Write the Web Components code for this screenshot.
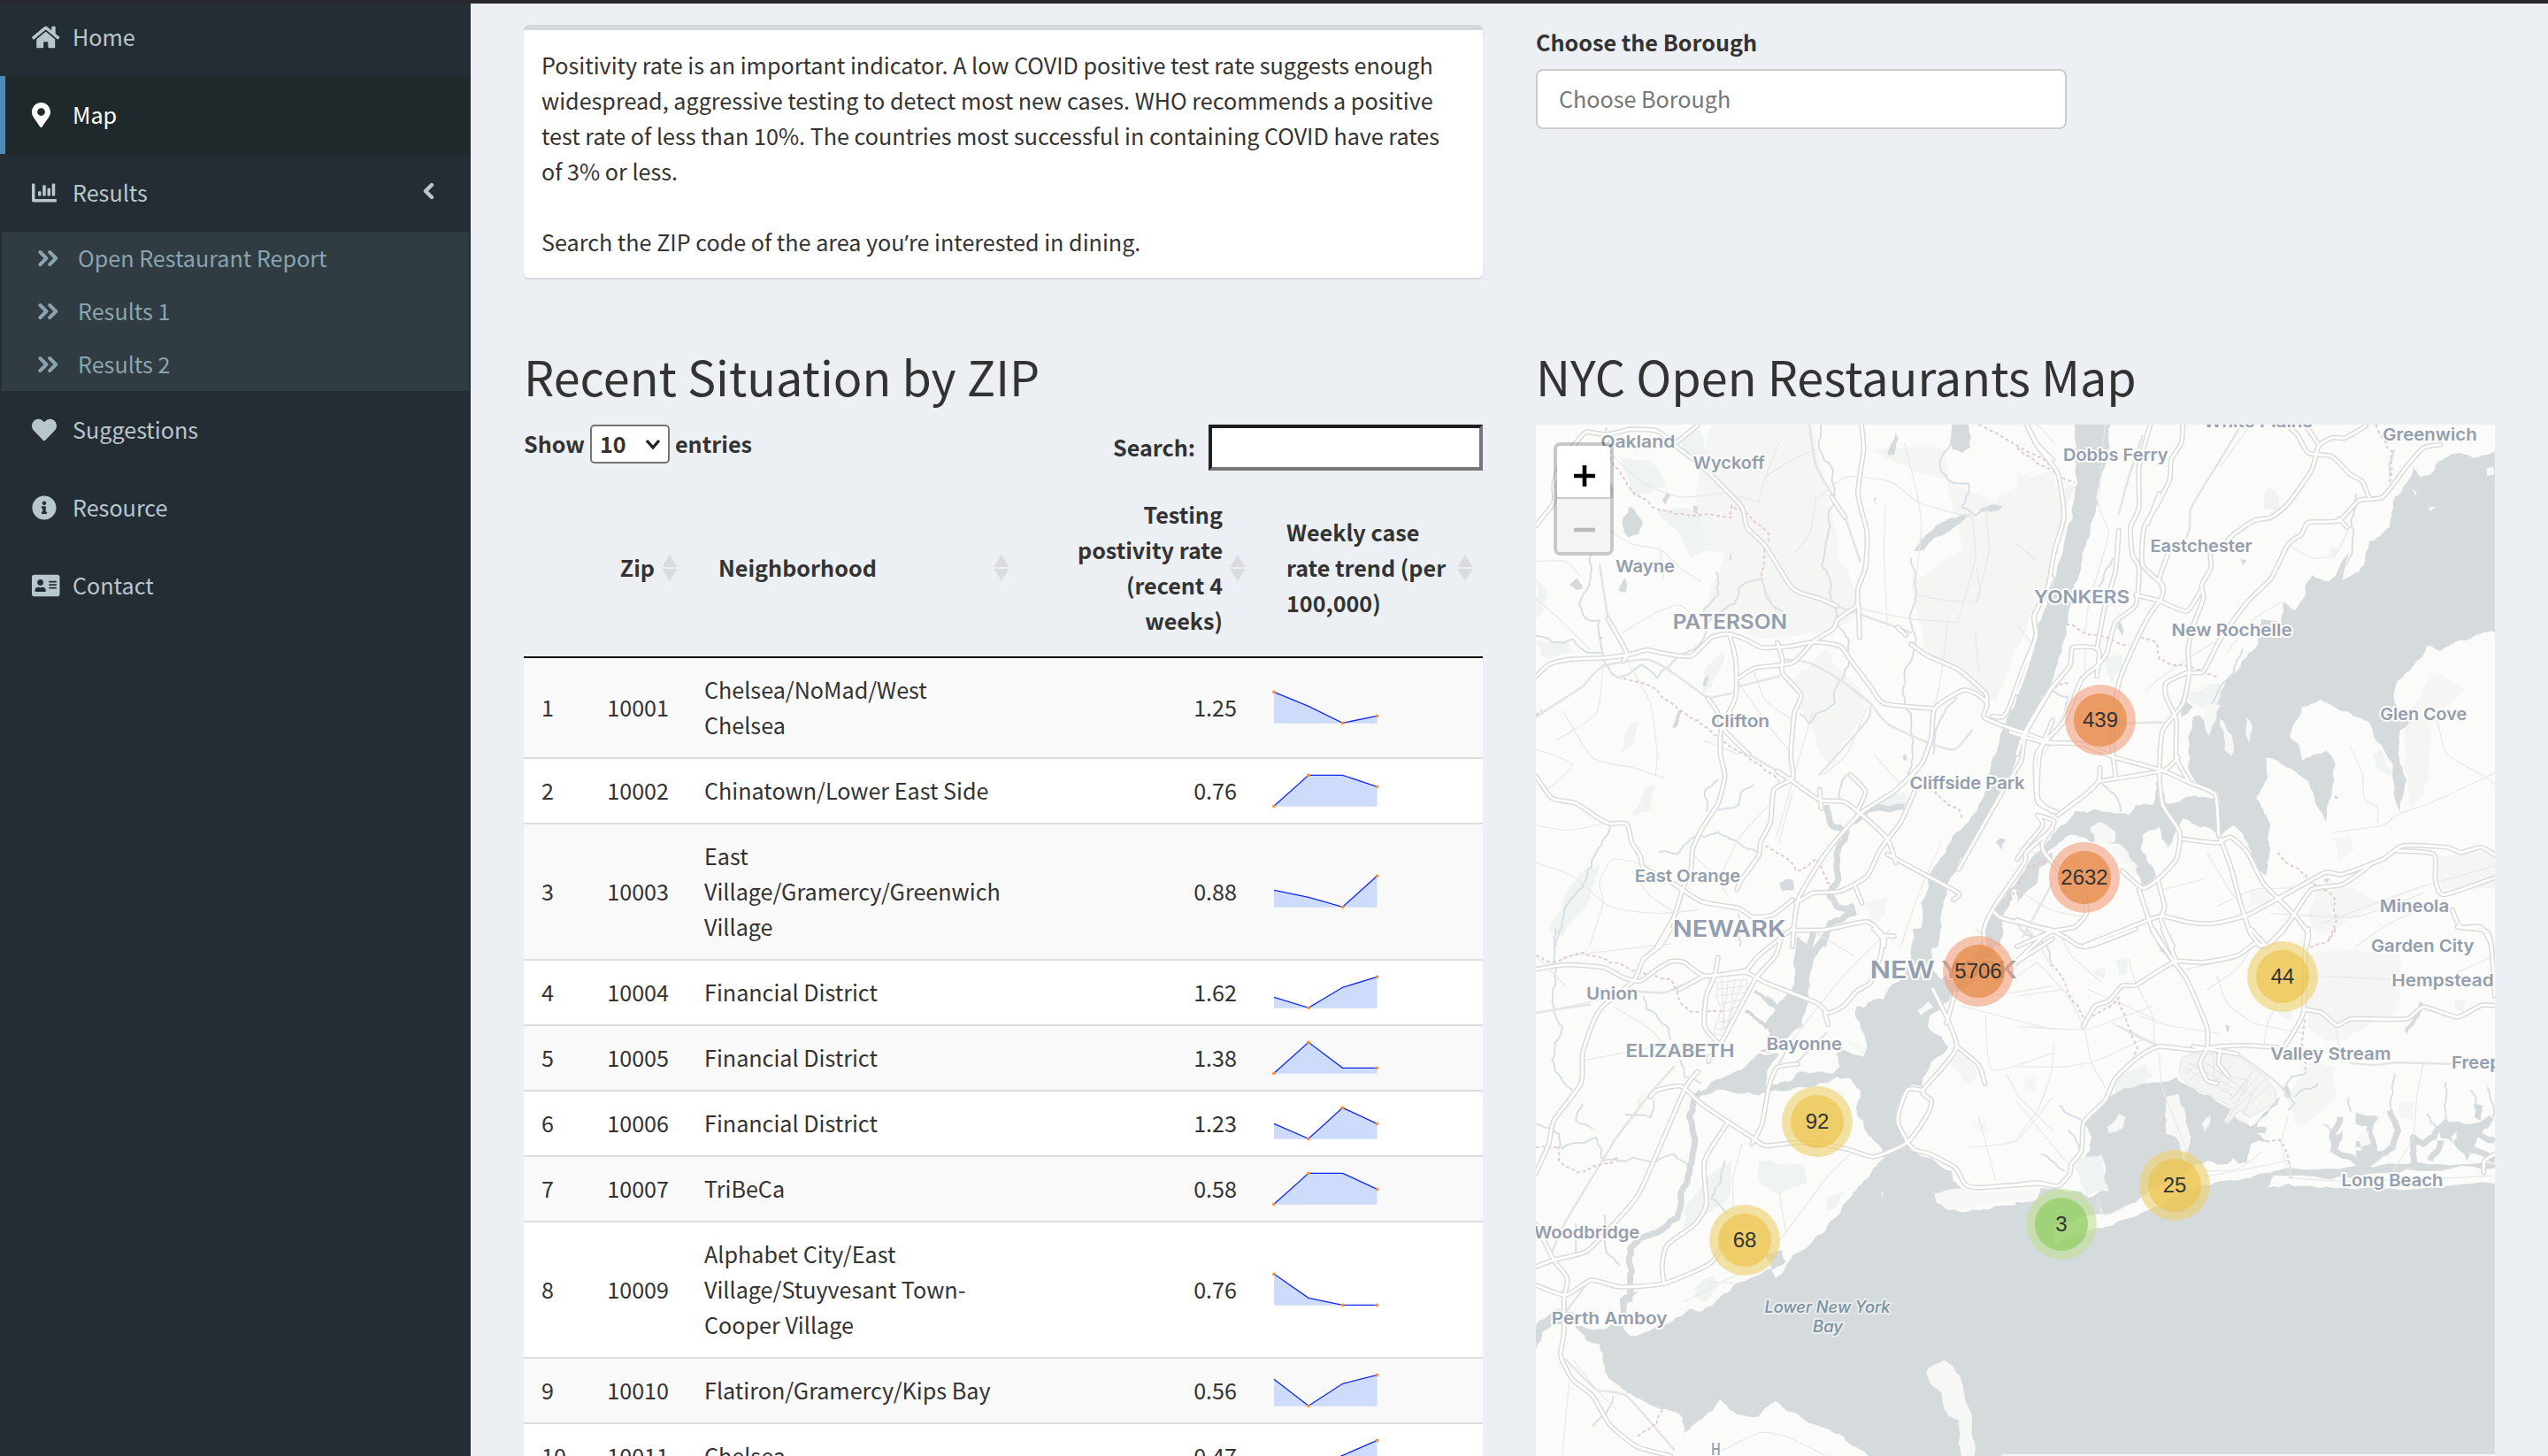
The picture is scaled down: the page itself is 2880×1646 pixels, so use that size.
<!DOCTYPE html>
<html lang="en">
<head>
<meta charset="utf-8">
<title>NYC Open Restaurants</title>
<style>
html,body{margin:0;height:100%;overflow:hidden;background:#ecf0f5}
body{font-family:"Noto Sans CJK SC","Noto Sans CJK JP","Open Sans",sans-serif;font-size:25.15px;line-height:40px;color:#333}
</style>
</head>
<body>
<dash-app></dash-app>
<script>
function define(name, css, html) {
  customElements.define(name, class extends HTMLElement {
    connectedCallback() {
      if (this.shadowRoot) return;
      this.attachShadow({mode: 'open'}).innerHTML = '<style>*{box-sizing:border-box}' + css + '</style>' + (typeof html === 'function' ? html(this) : html);
    }
  });
}

var ICONS = {
  home: [576, 'M280.37 148.26L96 300.11V464a16 16 0 0 0 16 16l112.06-.29a16 16 0 0 0 15.92-16V368a16 16 0 0 1 16-16h64a16 16 0 0 1 16 16v95.64a16 16 0 0 0 16 16.05L464 480a16 16 0 0 0 16-16V300L295.67 148.26a12.19 12.19 0 0 0-15.3 0zM571.6 251.47L488 182.56V44.05a12 12 0 0 0-12-12h-56a12 12 0 0 0-12 12v72.61L318.47 43a48 48 0 0 0-61 0L4.34 251.47a12 12 0 0 0-1.6 16.9l25.5 31A12 12 0 0 0 45.15 301l235.22-193.74a12.19 12.19 0 0 1 15.3 0L530.9 301a12 12 0 0 0 16.9-1.6l25.5-31a12 12 0 0 0-1.7-16.93z'],
  marker: [384, 'M172.268 501.67C26.97 291.031 0 269.413 0 192 0 85.961 85.961 0 192 0s192 85.961 192 192c0 77.413-26.97 99.031-172.268 309.67-9.535 13.774-29.93 13.773-39.464 0zM192 272c44.183 0 80-35.817 80-80s-35.817-80-80-80-80 35.817-80 80 35.817 80 80 80z'],
  chart: [512, 'M332.8 320h38.4c6.4 0 12.8-6.4 12.8-12.8V172.8c0-6.4-6.4-12.8-12.8-12.8h-38.4c-6.4 0-12.8 6.4-12.8 12.8v134.4c0 6.4 6.4 12.8 12.8 12.8zm96 0h38.4c6.4 0 12.8-6.4 12.8-12.8V76.8c0-6.4-6.4-12.8-12.8-12.8h-38.4c-6.4 0-12.8 6.4-12.8 12.8v230.4c0 6.4 6.4 12.8 12.8 12.8zm-288 0h38.4c6.4 0 12.8-6.4 12.8-12.8v-70.4c0-6.4-6.4-12.8-12.8-12.8h-38.4c-6.4 0-12.8 6.4-12.8 12.8v70.4c0 6.4 6.4 12.8 12.8 12.8zm96 0h38.4c6.4 0 12.8-6.4 12.8-12.8V108.8c0-6.4-6.4-12.8-12.8-12.8h-38.4c-6.4 0-12.8 6.4-12.8 12.8v198.4c0 6.4 6.4 12.8 12.8 12.8zM496 384H64V80c0-8.84-7.16-16-16-16H16C7.16 64 0 71.16 0 80v336c0 17.67 14.33 32 32 32h464c8.84 0 16-7.16 16-16v-32c0-8.84-7.16-16-16-16z'],
  heart: [512, 'M462.3 62.6C407.5 15.9 326 24.3 275.7 76.2L256 96.5l-19.7-20.3C186.1 24.3 104.5 15.9 49.7 62.6c-62.8 53.6-66.1 149.8-9.9 207.9l193.5 199.8c12.5 12.9 32.8 12.9 45.3 0l193.5-199.8c56.3-58.1 53-154.3-9.8-207.9z'],
  info: [512, 'M256 8C119.043 8 8 119.083 8 256c0 136.997 111.043 248 248 248s248-111.003 248-248C504 119.083 392.957 8 256 8zm0 110c23.196 0 42 18.804 42 42s-18.804 42-42 42-42-18.804-42-42 18.804-42 42-42zm56 254c0 6.627-5.373 12-12 12h-88c-6.627 0-12-5.373-12-12v-24c0-6.627 5.373-12 12-12h12v-64h-12c-6.627 0-12-5.373-12-12v-24c0-6.627 5.373-12 12-12h64c6.627 0 12 5.373 12 12v100h12c6.627 0 12 5.373 12 12v24z'],
  card: [576, 'M528 32H48C21.5 32 0 53.5 0 80v352c0 26.5 21.5 48 48 48h480c26.5 0 48-21.5 48-48V80c0-26.5-21.5-48-48-48zm-352 96c35.3 0 64 28.7 64 64s-28.7 64-64 64-64-28.7-64-64 28.7-64 64-64zm112 236.8c0 10.6-10 19.2-22.4 19.2H86.4C74 384 64 375.4 64 364.8v-19.2c0-31.8 30.1-57.6 67.2-57.6h5c12.3 5.1 25.7 8 39.8 8s27.6-2.9 39.8-8h5c37.1 0 67.2 25.8 67.2 57.6v19.2zM512 312c0 4.4-3.6 8-8 8H360c-4.4 0-8-3.6-8-8v-16c0-4.4 3.6-8 8-8h144c4.4 0 8 3.6 8 8v16zm0-64c0 4.4-3.6 8-8 8H360c-4.4 0-8-3.6-8-8v-16c0-4.4 3.6-8 8-8h144c4.4 0 8 3.6 8 8v16zm0-64c0 4.4-3.6 8-8 8H360c-4.4 0-8-3.6-8-8v-16c0-4.4 3.6-8 8-8h144c4.4 0 8 3.6 8 8v16z']
};

define('side-item', `
:host{display:flex;align-items:center;height:88px;padding:0 41px 0 36px;color:#b8c7ce;box-sizing:border-box}
:host([active]){color:#fff;background:#1f282b;border-left:6px solid #4f8cba;padding-left:30px}
.i{width:46px;display:flex}.t{flex:1;padding-bottom:3px}svg{display:block}`,
function (el) {
  var icon = ICONS[el.getAttribute('icon')];
  return `<span class="i"><svg width="${icon[0] * 28 / 512}" height="28" viewBox="0 0 ${icon[0]} 512"><path fill="currentColor" d="${icon[1]}"/></svg></span><span class="t"><slot></slot></span>` +
    (el.hasAttribute('tree') ? '<svg width="14" height="22" viewBox="0 0 14 22" style="margin-bottom:4px"><path d="M11 4L4 11l7 7" fill="none" stroke="currentColor" stroke-width="4.4" stroke-linecap="round" stroke-linejoin="round"/></svg>' : '');
});

define('side-subitem', `
:host{display:flex;align-items:center;height:60px;padding-left:41px;color:#8aa4af;box-sizing:border-box}
svg{display:block;margin-right:22px}.t{padding-bottom:2px}`,
`<svg width="23" height="20" viewBox="0 0 23 20"><path d="M2.4 3l7 7-7 7M13.2 3l7 7-7 7" fill="none" stroke="currentColor" stroke-width="4" stroke-linecap="round" stroke-linejoin="round"/></svg><span class="t"><slot></slot></span>`);

define('dash-sidebar', `
:host{display:block;width:532px;flex:none;background:#242d34;overflow:hidden}
nav{margin-top:-6px}.sub{background:#303b42;margin:0 2px}`,
`<nav><side-item icon="home">Home</side-item><side-item icon="marker" active>Map</side-item><side-item icon="chart" tree>Results</side-item>
<div class="sub"><side-subitem>Open Restaurant Report</side-subitem><side-subitem>Results 1</side-subitem><side-subitem>Results 2</side-subitem></div>
<side-item icon="heart">Suggestions</side-item><side-item icon="info">Resource</side-item><side-item icon="card">Contact</side-item></nav>`);

define('info-box', `
:host{display:block;box-sizing:border-box;height:286px;background:#fff;border-top:6px solid #d2d6de;border-radius:6px;padding:19px 18px 21px 20px;box-shadow:0 2px 2px rgba(0,0,0,.1);white-space:nowrap}`,
`<slot></slot>`);

define('spark-line', `:host{display:block;height:36px}svg{display:block;overflow:visible}`, function (el) {
  var xs = [0, 39, 77.5, 116.5];
  var p = el.getAttribute('v').split(',').map(function (y, i) { return [xs[i], 35.3 - y]; });
  var dots = el.getAttribute('dots').split(',').map(function (i) { return `<circle cx="${p[i][0]}" cy="${p[i][1]}" r="1.9" fill="#f5923b"/>`; }).join('');
  return `<svg width="117" height="36"><path fill="#cedcfb" d="M0 35.8L${p.join('L')}V35.8z"/><polyline fill="none" stroke="#1226f0" stroke-width="1.3" points="${p.join(' ')}"/>${dots}</svg>`;
});

var ROWS = [
  ['10001', 'Chelsea/NoMad/West<br>Chelsea', '1.25', '35,19,0,8', '0,2,3'],
  ['10002', 'Chinatown/Lower East Side', '0.76', '0,35,35,22', '0,1,3'],
  ['10003', 'East<br>Village/Gramercy/Greenwich<br>Village', '0.88', '19,11,0,35', '2,3'],
  ['10004', 'Financial District', '1.62', '12,0,23,35', '1,3'],
  ['10005', 'Financial District', '1.38', '0,35,6,6', '0,1,3'],
  ['10006', 'Financial District', '1.23', '17,0,35,17', '1,2,3'],
  ['10007', 'TriBeCa', '0.58', '0,35,35,17', '0,1,3'],
  ['10009', 'Alphabet City/East<br>Village/Stuyvesant Town-<br>Cooper Village', '0.76', '35,8,0,0', '0,2,3'],
  ['10010', 'Flatiron/Gramercy/Kips Bay', '0.56', '30,0,25,35', '1,3'],
  ['10011', 'Chelsea', '0.47', '5,0,18,35', '1,3']
];
var SORT = '<svg class="s" width="18" height="30" viewBox="0 0 18 30"><path fill="#d9dbde" d="M9 0l8.5 14H.5zM9 30L.5 16h17z"/></svg>';
define('zip-table', `
:host{display:block}
.bar{display:flex;justify-content:space-between;align-items:flex-start;height:62px;font-weight:700}
.len{display:flex;align-items:center;height:44px;gap:6px}
.sel{display:flex;align-items:center;justify-content:space-between;width:90px;height:44px;border:2px solid #757575;border-radius:5px;background:#fff;padding:0 8px 0 9px}
.find{display:flex;align-items:center;gap:15px}
.find input{display:block;width:310px;height:52px;margin:0;padding:0;border:4px solid;border-color:#1f1e22 #767676 #767676 #1f1e22;background:#fff;outline:0}
.r{display:grid;grid-template-columns:82px 102px 376px 266px 258px;align-items:center}
.r>*{padding:0 20px}.r>.n{text-align:right;padding-left:0}
.h{height:202px;border-bottom:2px solid #111;font-weight:700}
.h>*{padding:0 11px 0 36px;display:flex;align-items:center;align-self:stretch;justify-content:space-between}
.h>*>span{margin-top:-2px}
.h>.n{padding:0 10px;justify-content:flex-end;gap:8px}
.s{flex:none;display:block}
.b{padding:15px 0 17px;background:#fff;border-top:2px solid #ddd}
.b:nth-child(odd){background:#f9f9f9}
.b:first-child{border-top:0}
.b>:last-child{padding:2px 0 0 22px}
.c{margin-top:-2px}`,
function () {
  return `<div class="bar"><div class="len"><span class="c">Show</span><span class="sel"><span class="c">10</span><svg width="18" height="14" viewBox="0 0 18 14"><path d="M2 3l7 8 7-8" fill="none" stroke="#222" stroke-width="3.4"/></svg></span><span class="c">entries</span></div>
  <label class="find"><span class="c">Search:</span><input type="text"></label></div>
  <div class="r h"><span></span><span class="n"><span>Zip</span>${SORT}</span><span><span>Neighborhood</span>${SORT}</span><span class="n"><span>Testing<br>postivity rate<br>(recent 4<br>weeks)</span>${SORT}</span><span><span>Weekly case<br>rate trend (per<br>100,000)</span>${SORT}</span></div>
  <div>` + ROWS.map(function (r, i) {
    return `<div class="r b"><span>${i + 1}</span><span class="n">${r[0]}</span><span>${r[1]}</span><span class="n">${r[2]}</span><span><spark-line v="${r[3]}" dots="${r[4]}"></spark-line></span></div>`;
  }).join('') + '</div>';
});

define('borough-field', `
:host{display:block;height:366px;box-sizing:border-box}
b{display:block;height:40px;line-height:38px}
.f{display:flex;align-items:center;width:600px;height:68px;margin-top:10px;border:2px solid #ccc;border-radius:8px;background:#fff;padding:0 24px 2px;color:#777}`,
`<b><slot name="label"></slot></b><div class="f"><slot></slot></div>`);

define('map-cluster', `
:host{position:absolute;box-sizing:border-box;width:80px;height:80px;margin:-40px 0 0 -40px;border-radius:50%;padding:10px;background:rgba(238,209,107,.6);--core:rgba(236,193,67,.6)}
:host([size=large]){background:rgba(241,159,124,.6);--core:rgba(227,129,50,.6)}
:host([size=small]){background:rgba(191,225,149,.6);--core:rgba(133,202,85,.6)}
div{height:60px;border-radius:50%;background:var(--core);text-align:center;font:24px/60px "Liberation Sans",Arial,sans-serif;color:#333}`,
`<div><slot></slot></div>`);

/* Four map tiles; each keeps its own local units, placed by TILES: x, y, x scale, y scale. */
var K = 0.38265, KY = 0.3801;
var TILES = { A: [-16, -10, K, K], B: [544, -10, K, K], C: [-16, 570, K, KY], D: [544, 570, K, KY] };
var MAP = {
urban: {
 A: ['560,26 860,26 900,200 930,400 1000,560 980,600 900,640 700,660 530,570 600,400 500,400 520,200','800,780 900,690 1010,830 1000,900 920,1030 880,1000','1030,100 1250,100 1300,400 1150,500 1200,700 1350,820 1400,850 1500,600 1568,400 1568,160 1400,250','1020,1440 1080,1420 1060,1490 1030,1530'],
 B: ['0,170 110,200 140,300 100,480 50,580 0,640','1140,900 1230,760 1330,810 1220,900 1220,1070 1160,1170','1240,1300 1411,1280 1411,1400 1250,1400','880,1400 960,1390 1080,1440 900,1530 860,1480','930,1250 980,1240 1000,1280 950,1310','690,1400 740,1400 760,1440 680,1460'],
 C: ['1260,390 1300,370 1350,430 1320,460','1330,570 1370,570 1380,600 1350,610'],
 D: ['850,80 950,60 1130,80 1130,180 1120,250 920,340 860,290','790,500 860,400 940,410 940,500 830,590','1130,515 1175,515 1170,565 1130,560','25,440 60,440 50,485 25,485']
},
park: {
 A: ['400,270 520,280 540,400 500,420 470,350 410,300','545,740 590,700 600,720 560,800 530,830','320,910 345,905 320,980 285,1000','360,1110 395,1090 375,1170 330,1180','42,480 75,520 60,590 42,600','42,660 140,670 150,700 60,710','170,1350 230,1330 200,1430 120,1540 80,1520','1050,1130 1130,1110 1140,1150 1060,1160','470,60 520,40 560,130 480,110','290,120 380,130 430,210 330,240'],
 B: ['725,230 745,215 775,245 770,285 730,275','1050,1000 1075,985 1110,1060 1060,1035','265,715 310,705 310,740 280,790 265,760','150,205 170,205 140,310 125,270','925,390 950,390 935,440','500,830 600,790 600,870 540,860'],
 C: ['545,740 620,690 615,790 570,830 470,920 480,830','700,690 830,700 840,760 760,790 700,750','900,800 950,780 930,830 900,840','510,1070 560,1030 580,1070 530,1110','340,510 370,480 350,540'],
 D: ['160,700 250,660 272,770 200,800 190,760','290,440 380,400 400,440 290,500','290,90 330,85 325,130 300,140','1295,215 1325,215 1320,250 1295,240','210,120 260,115 255,150','770,240 815,250 810,270 780,262']
},
water: {
 A: ['1551,560 1528,610 1515,680 1480,780 1455,860 1430,920 1405,980 1385,1040 1375,1100 1350,1150 1320,1200 1270,1250 1230,1320 1200,1370 1180,1440 1170,1568 1230,1568 1245,1450 1260,1380 1290,1330 1340,1260 1370,1200 1410,1130 1445,1060 1475,980 1490,920 1530,850 1568,760 1568,560','1568,1290 1510,1300 1490,1360 1430,1420 1400,1450 1370,1520 1365,1568 1415,1568 1420,1490 1450,1400 1510,1350 1568,1305','1270,28 1320,28 1325,95 1300,110 1272,100','1160,400 1180,365 1240,315 1330,290 1300,315 1220,360 1190,395','1350,275 1400,262 1420,268 1385,285','300,300 320,268 357,315 345,350 315,360 298,325','415,250 430,225 440,235 425,262','1080,115 1105,50 1112,70 1100,115','262,190 272,220 268,245 262,245','285,515 305,480 308,522','445,920 462,870 475,870 455,922','760,1380 800,1370 805,1400 770,1405','1400,1260 1415,1248 1430,1252 1415,1282','505,265 520,268 520,290 508,285','140,500 165,480 180,510 160,515','615,410 620,408 620,425 614,425','535,800 550,765 545,800','1125,1005 1135,1000 1138,1018 1127,1018','1040,245 1048,240 1045,262'],
 B: ['170,20 175,90 178,200 165,300 140,370 120,440 105,500 88,560 65,610 52,680 35,760 0,850 0,960 20,930 60,860 95,800 120,720 145,620 158,560 180,480 190,410 215,350 238,260 243,190 270,100 277,20','1411,105 1350,125 1310,110 1240,140 1225,170 1190,180 1170,150 1150,200 1115,240 1100,330 1040,370 1010,460 960,485 985,400 920,490 870,470 845,540 820,575 785,550 780,610 720,600 700,690 660,740 620,775 590,860 555,900 540,885 520,890 505,950 505,1040 520,1070 545,1100 590,1110 600,1240 640,1210 680,1260 700,1310 735,1360 745,1270 745,1200 705,1130 740,1070 735,1010 800,1040 860,1080 890,1160 910,1220 930,1110 940,1030 910,990 840,1020 835,980 805,950 840,860 895,838 950,870 1040,905 1060,960 1110,1030 1130,1170 1150,1080 1125,1000 1130,930 1160,900 1115,850 1120,790 1170,740 1210,680 1250,695 1350,650 1411,640','600,1240 595,1130 500,1125 440,1145 410,1080 400,1150 350,1150 330,1180 240,1165 170,1170 130,1210 60,1290 0,1380 0,1440 60,1380 80,1290 150,1240 220,1260 300,1270 350,1340 370,1390 410,1360 365,1280 370,1240 420,1215 445,1280 490,1190 560,1215','300,605 315,635 310,650 295,625','660,420 678,428 665,442','905,1370 925,1368 915,1382','935,1120 950,1130 940,1132','500,845 520,860 485,890'],
 C: ['1155,0 1150,80 1120,150 1090,170 1070,210 1040,210 1010,235 990,230 985,260 1020,350 1010,380 950,360 930,370 940,410 920,430 850,430 820,425 790,455 720,465 725,420 760,370 700,370 670,400 620,430 560,455 520,490 540,495 580,478 640,490 700,495 750,480 860,470 930,440 970,445 1000,480 990,550 1020,610 1065,655 1070,680 1010,750 950,820 900,890 840,950 800,970 750,1040 735,1010 700,1030 650,1050 590,1090 530,1140 500,1130 440,1170 380,1195 320,1210 300,1190 310,1110 345,1080 290,1100 290,1160 250,1190 200,1190 155,1180 190,1225 230,1235 240,1270 260,1340 310,1380 370,1410 430,1430 475,1455 480,1500 540,1450 585,1400 640,1445 700,1450 750,1405 850,1470 950,1510 1030,1575 1575,1575 1575,810 1400,825 1330,835 1260,835 1225,815 1220,790 1330,790 1275,750 1270,720 1220,690 1160,660 1140,640 1115,600 1110,530 1140,470 1180,470 1200,420 1260,350 1240,320 1200,290 1205,260 1240,230 1300,180 1380,120 1418,0 1365,0 1330,100 1240,150 1205,120 1225,0','815,20 860,60 905,0 860,100 845,190 830,290 790,320 730,370 700,365 750,340 720,280 780,200 805,150','42,1180 110,1130 180,1150 60,1200 42,1250','720,970 770,955 780,990 740,1015','690,180 765,235 755,248 685,190','660,238 740,290 720,300'],
 D: ['200,570 290,490 370,460 470,440 510,470 620,530 660,560 690,590 760,510 800,480 730,560 700,600 740,630 690,640 680,695 655,700 640,680 620,700 560,690 500,720 400,770 330,820 260,850 210,800 270,780 250,670 200,680 220,620','0,812 60,800 70,770 180,780 210,800 260,850 100,880 35,920 35,975 100,950 230,890 360,850 480,790 600,750 700,735 760,730 740,770 800,758 950,770 1100,772 1411,757 1411,1575 -5,1575 -5,812','750,725 800,712 950,715 1150,700 1411,700 1411,712 1150,715 960,738 850,735 770,735','1265,570 1340,580 1390,560 1360,620 1330,690 1290,640 1250,620','1000,545 1070,560 1040,590 1000,580','1000,660 1060,650 1080,680 1040,715 1000,720','920,620 960,600 950,650 925,670','615,285 628,290 622,310','1190,215 1200,225 1150,315 1145,300','1350,520 1375,525 1370,570 1350,560']
},
land: {
 B: ['600,895 635,945 633,1005 612,985','675,890 695,920 685,965 675,940','215,1215 240,1200 290,1230 290,1260 230,1265','1385,155 1405,150 1408,175 1388,178','1215,270 1240,268 1220,282','1165,215 1180,225 1175,240','560,860 600,855 590,890 568,945 552,900','280,1275 295,1262 355,1330 345,1350 300,1310'],
 C: ['1195,1320 1220,1295 1248,1282 1300,1350 1330,1450 1335,1575 1300,1575 1290,1460 1255,1440 1240,1380 1200,1335','1170,240 1200,215 1215,235 1180,258','1220,785 1250,778 1525,785 1525,805 1260,835 1230,812','910,305 1020,350 1005,380','1060,785 1068,785 1066,800'],
 D: ['265,590 300,550 320,560 310,595 270,607','440,500 475,490 500,560 510,640 490,700 470,620 440,610','545,580 570,555 555,605','610,570 640,540 690,560 680,580 640,555 620,580','1010,610 1040,600 1045,640 1015,650','1280,620 1300,600 1290,640']
},
stream: {
 A: ['885,26 880,100 920,160 925,250 905,300 905,350 885,440 910,480 920,560 930,620 965,660 965,740 930,800 925,850 870,880 850,910 820,880','42,650 90,670 150,660 200,700 240,700 260,750 290,775 350,735 400,775 460,710 510,690 560,600 630,555 640,510 710,480 740,560 770,580','205,410 200,500 170,560 190,600 230,605 240,700','575,460 580,530 530,590','1150,420 1165,530 1145,600 1165,660 1130,760 1125,820 1150,880 1155,1010 1140,1060','1285,830 1235,900 1215,1000','1270,80 1235,140 1260,190 1320,200 1300,270 1340,295 1415,268','580,1075 540,1110 545,1170','685,1090 650,1110 640,1150 580,1165','405,1290 460,1295 500,1250 580,1230 640,1260 700,1290','265,1200 220,1290 190,1370 130,1450 100,1568','640,1470 645,1568','960,1060 940,1130 920,1140'],
 B: ['285,420 260,460 240,505','1115,100 1100,180','1000,230 985,310 990,380 960,480','500,780 480,850','575,850 600,800 640,760 665,690','250,1090 300,1140 305,1170','90,810 150,830 140,870','0,1500 60,1560'],
 C: ['100,0 100,110 90,220 120,290 90,390 120,450 150,480','360,200 370,240 430,290 440,330','42,580 110,610 120,655 220,620 240,690 330,680 400,690 450,670 490,700','600,690 590,750 560,800 610,850','470,390 480,440 530,460','245,850 250,960 290,1000','180,520 160,570 210,595','305,550 380,560 390,510','1205,320 1210,355 1225,345 1215,315','270,1390 250,1440 210,1480'],
 D: ['25,0 85,50 100,100','125,525 190,570','70,670 140,720','150,600 180,640 185,660','800,480 820,520 800,540','790,470 810,440 855,425','820,500 890,460','980,500 985,545','1115,430 1105,540','1265,455 1268,570','1340,480 1360,530','1390,470 1405,560','1210,550 1240,590','905,580 940,610']
},
creek: {
 A: ['900,1150 915,1210 960,1230 930,1300 935,1370 910,1420 930,1450 975,1450 980,1470 910,1500 890,1568','980,1200 1020,1165 1130,1155'],
 C: ['320,1110 325,1020 320,950 350,920 420,890 460,860 470,800 490,740 510,650 495,560 530,485','860,0 850,60 820,100'],
 D: ['400,0 430,60 460,90','935,660 990,680 1010,700','955,560 930,620','1060,560 1040,600 1055,650 1000,640','1100,540 1125,600 1110,650 1060,670','1270,570 1230,620 1200,640 1170,620 1175,700','1250,630 1220,690','1340,600 1345,660 1411,690','1345,600 1411,630','1400,560 1380,590','735,600 700,595','790,470 800,500']
},
minor: {
 A: ['42,430 130,430 170,470','260,340 330,380 410,395 470,450 530,490','410,400 420,480','270,120 360,200 470,240 600,230 700,255','700,255 720,180 760,80','720,180 800,130 870,100','880,240 960,180 1090,195 1180,260 1330,300','1130,80 1170,240 1180,340 1160,520','1075,260 1070,400 1080,620','1000,570 1150,600 1290,610','1170,530 1250,545 1350,545 1345,450','320,740 380,850 400,1000 395,1060','120,870 210,1010 330,1040 420,1070','42,985 150,1030 70,1110','240,740 220,880 100,960','640,790 740,930 800,1000','680,740 720,840 800,900','710,490 760,600','640,1000 540,960','860,870 800,1080 750,1250','740,1140 640,1250 580,1380','800,1110 760,1260','42,1320 150,1360 260,1450 400,1470 520,1460','200,1568 240,1440 230,1380 270,1310 380,1330','330,1350 380,1420 460,1470','1260,600 1240,760 1220,860','1340,640 1350,760','1020,860 960,1000 890,1060','1040,1000 1120,1090','870,240 850,350 810,400','1330,300 1340,420 1290,600','1370,270 1380,400 1340,560','42,1210 140,1225 260,1200','1120,1568 1170,1420 1240,1260','530,620 470,560 400,580 300,640','500,1290 570,1360 610,1420','42,540 110,600 200,690'],
 B: ['260,26 240,260 270,350 215,540 200,640','60,26 110,80','690,26 600,150','800,380 870,420 940,410 980,330','1240,900 1270,1000 1370,1060 1411,1090','1411,1055 1230,1140 1120,1180 1080,1210 940,1230','985,980 1020,1060 1025,1130 1065,1160 1065,1200','0,1280 150,1310 220,1330','350,905 430,910','560,1290 620,1390 640,1420','430,1400 550,1370','0,1400 100,1460 200,1480','80,1000 130,900 150,840','590,1450 700,1400 840,1395','900,1500 1060,1440 1200,1390 1411,1330','750,1470 1000,1480 1200,1410','580,670 470,740 380,810','780,550 700,600 620,700','0,380 60,430','0,620 50,680','1000,1568 1100,1500 1190,1460','200,690 200,760 180,800'],
 C: ['42,250 190,220 330,190','190,390 400,350','270,230 380,300 440,370','120,85 220,70 440,45','42,80 130,170','850,0 980,80','1090,0 950,140 800,330','1300,230 1568,300','1370,260 1390,420 1568,370','1390,200 1568,170','1350,560 1400,750','1320,650 1460,630 1568,500','1430,430 1470,500 1568,600','970,670 900,740 790,890 700,990 480,1110','650,640 625,740 625,850','760,780 780,900','560,1568 700,1500 780,1510 900,1568','150,1280 220,1370 280,1430','140,1350 130,1450 120,1568','1340,0 1430,80','1500,0 1568,120','550,1050 630,1055','1370,180 1500,80'],
 D: ['0,290 200,300 290,270 400,230','0,410 140,410 240,390 370,330','60,100 150,200 195,290','130,20 160,80 250,160','330,90 350,160 400,260 405,350','280,280 350,320 420,350','0,515 150,700','110,340 100,430 60,540 0,620','200,300 220,400 260,470','0,140 60,100','560,180 650,120 690,60','590,140 620,220 700,280 840,310','860,140 980,145 1100,150','960,400 940,290','1411,80 1300,130 1220,180','800,560 780,640 805,740','540,740 700,710 800,690','560,720 650,715 730,660','420,370 430,480 500,660 480,720','1200,400 1180,500 1170,620 1110,720','235,800 260,850 330,820','800,740 950,750 1200,745 1400,735','730,340 740,280 770,220','0,200 140,180','820,390 900,370','500,120 640,90','360,260 460,290 590,310','410,270 300,220 210,180']
},
mid: {
 A: ['850,26 870,150 950,290 1000,430','780,720 850,730 940,780 1030,850 1080,910 1210,970 1280,985 1330,930','180,800 240,740 370,720 440,755 550,835','42,890 180,800','930,562 1150,640','230,440 255,600','640,800 760,770','550,835 620,820','1568,1380 1480,1540','1030,860 1020,900 880,1060','670,1000 755,1050'],
 B: ['300,290 330,180 370,60','660,30 600,130 515,270 510,330 500,360','280,910 430,905','200,1568 300,1540'],
 C: ['42,250 200,225','330,185 420,190 480,165','280,620 380,490 450,410','90,960 130,870 280,620','160,880 160,960','130,1280 220,1370 310,1390 450,1550','900,310 810,400','800,330 760,400','190,1060 130,1140'],
 D: ['640,365 720,420 780,470 800,500','985,400 1060,405 1120,398 1280,402','562,350 640,370','410,345 300,290','805,700 810,740']
},
major: {
 A: ['42,325 95,255 95,200 120,130 160,80 190,48 240,55 280,50 320,40 400,45 450,85 520,140 560,175 650,270 665,330 720,385 800,510 880,540 930,562','450,85 520,28','1003,20 1010,100 993,230 1020,345 1015,450 993,510 990,560 935,600 920,630 860,668 800,730 690,745 640,775','42,770 80,735 140,720 250,715 320,705 370,692 420,702 500,710 560,655 610,645 660,660 710,685 800,680 860,668 940,680 970,720 1030,800 1070,850 1215,865','255,600 310,700 300,725','615,650 632,720 632,830 590,925 587,1000 600,1065 580,1145 535,1215 505,1280 500,1340 475,1400 450,1480 400,1568','550,835 575,870 600,930 670,1000','755,670 770,720 770,760 825,825 805,880 795,1000 800,1070 745,1105 735,1200 705,1260 700,1300 650,1370 635,1400','755,1050 800,1080 880,1135 950,1140 1000,1175 1080,1250 1105,1320','1080,1295 1180,1350 1290,1410 1275,1430','42,1065 90,1130 160,1145 220,1185 260,1205 310,1205 325,1260 350,1300 360,1335 430,1370 530,1435 640,1455 680,1480 740,1475 800,1430','800,1568 805,1500 820,1420 900,1290 1000,1175 1100,1110 1180,1030 1210,950 1220,865 1300,812 1340,820 1375,850 1365,890 1420,915 1480,935 1568,968','810,1440 860,1410 940,1405 1020,1360 1060,1280 1120,1200 1160,1110','1150,675 1200,710 1290,750 1370,820 1372,850','1568,480 1515,590 1520,650 1480,750 1440,860 1420,890 1390,888','1568,800 1490,935 1475,1020 1420,1110 1290,1340','800,1520 900,1518 1020,1495 1070,1540 1070,1568','1568,900 1530,1000 1525,1130 1568,1170','1568,1220 1490,1290 1485,1320 1390,1460 1365,1520 1370,1568','1390,1460 1420,1485 1568,1520','915,240 955,300','995,560 998,655','1490,20 1520,80 1568,130','880,1105 885,1160','990,1170 1015,1110 970,1060','1110,625 1135,648','985,1390 1005,1440'],
 B: ['25,20 60,90 120,170 138,300 110,400 90,510 50,590 55,650 20,770 0,820','395,20 360,150 360,270 335,330 340,410 360,450 350,560 290,610 265,700 235,740 190,780 140,900 80,965 55,1010 60,1140 115,1170','490,20 485,80 455,130 450,190 410,270 375,330 370,440 430,500 425,540 390,590 340,690 300,790 280,950 290,1065','420,230 385,320','235,770 240,690 165,685 155,740 90,820 20,940 0,1000','300,340 290,460 260,560 235,690','-20,935 80,965 190,970 290,1010 430,1048 510,1085 585,1120 595,1240','350,530 415,545 500,578 540,520','445,410 420,480 430,510','570,410 572,450 545,500 550,540 520,620 505,690 508,760 490,850 430,930 420,1050 430,1150 480,1230 470,1310 415,1370 370,1395 310,1345','1030,30 970,65 930,65 890,90 870,160 800,260 750,300 700,310 640,350 620,370','800,30 830,60 860,110 930,120 980,170 1020,195 1040,245','860,40 890,85','1250,85 1200,95 1150,150 1080,240 1010,250 950,310 860,315 840,350 800,380 750,480 680,550 600,660 550,755 500,760 440,790 440,830 470,900 470,1010 510,1085','240,1080 430,1048 475,1010','120,1180 200,1120 240,1080 245,1040','60,1180 110,1200 75,1260 80,1290 130,1350','200,1420 205,1470 170,1510 100,1525 0,1568','490,1250 590,1262 630,1245 680,1290 730,1385 820,1475 860,1530 855,1568','600,1250 630,1330 660,1440 690,1530 720,1568','1411,1298 1370,1275 1310,1290 1270,1275 1140,1270 1080,1310 960,1355 910,1350 800,1410 680,1475 580,1500 500,1495 425,1478 350,1505 200,1565','1411,1365 1260,1415 1235,1370 1230,1295 1120,1285','740,1565 800,1500 870,1400 960,1385 1040,1330','360,1400 400,1520 430,1568','415,1370 435,1450 425,1490 460,1568','0,1490 100,1525','1285,1460 1310,1510 1370,1510 1400,1560','950,305 975,330','60,1180 75,1210 20,1280 0,1310'],
 C: ['42,120 130,107 240,115 300,145 350,155 400,120 440,97 480,100 540,140 660,130 720,160 870,220 905,250 950,230 990,185 1030,160 1060,80 1065,30 1040,0','440,0 410,50 360,90 330,155 240,230 210,280 180,370 175,460 95,570 80,640 42,725','800,0 700,80 660,130','770,10 750,80 690,150 600,320 590,335','555,380 552,395','520,425 480,480 350,780 270,880 190,960 95,985 42,1005','380,500 400,480 470,468 530,520 610,575 680,620 720,645 830,635 960,655 1040,678 1140,635 1200,550 1210,510 1185,480 1285,350 1215,180','1140,635 1112,580 1115,540 1140,478 1185,480','1140,635 1160,658 1200,668 1280,710 1310,760 1350,770 1520,758 1568,765','1285,350 1350,405 1368,460','1280,190 1255,280','815,402 755,412 730,470 710,580 680,640','610,575 540,690 545,820 510,880 430,940 415,1000 420,1055','605,900 590,950 550,1000 420,1055 290,1065 205,1045 130,1090 42,1060','42,880 95,985 135,1040 125,1100 125,1200 115,1270 150,1340 210,1390 260,1475 340,1540 440,1568','580,85 570,140 545,200 540,290 580,340','465,180 540,140','905,285 895,250','1568,30 1460,100','565,140 660,125','1100,22 1070,20'],
 D: ['0,95 100,8 180,50 220,50 350,0','400,0 460,95 500,150 560,290 562,350','430,0 470,95','195,290 230,230 270,215 310,170 350,168 410,130 470,97 550,100 650,80 700,45 740,50 790,0','690,0 740,55','0,762 60,755 120,765 155,730 160,700 190,660 197,575 260,510 290,445 360,380 420,350 520,360 600,350 680,347 790,355','860,0 850,80 845,250 790,350','850,240 900,250 945,287 990,268 1150,268 1200,232 1300,262 1370,228 1411,228','560,360 540,400 560,450 590,460','600,360 595,400 625,440','1300,-5 1390,10 1405,100 1411,200','1411,670 1380,690 1378,725','520,350 650,372']
},
border: {
 A: ['250,35 260,120 320,215 400,275 480,290 620,300 620,265 730,350 708,475','1350,26 1568,155','300,775 360,790 460,865 520,900 600,965 760,1080','42,885 60,870','230,660 245,650','1220,1110 1290,1160 1300,1190','720,1270 770,1300 810,1345 870,1310 900,1380 920,1382','1568,1320 1500,1330 1430,1450'],
 B: ['0,95 170,198','145,615 330,680','365,655 410,670 420,720 530,750 590,772','1060,26 1110,110 1100,200','770,1290 850,1355 940,1430 945,1490 920,1555','110,805 150,790'],
 C: ['42,80 90,100 180,70 260,100 440,150 480,230 510,247 600,240','660,245 740,310 700,380','42,650 110,645 110,690 165,725 260,700 285,680','415,1430 400,1475 340,1515'],
 D: ['100,105 150,190 195,262 240,250 300,205 355,355 340,400','865,55 920,35 940,0','850,270 840,340 850,425','435,560 435,615','695,585 690,600','735,632 775,628 805,700']
}
};
/* text, tile, start x, end x, baseline y, size */
var LABELS = [
 ['Oakland','A',233,453,94,50],['Wyckoff','A',506,718,157,50],['Wayne','A',277,452,462,50],['PATERSON','A',446,784,629,58],['Clifton','A',559,732,920,50],['Cliffside Park','A',1146,1486,1104,50],['East Orange','A',334,646,1378,50],['NEWARK','A',446,780,1538,66],
 ['White Plains','B',550,872,34,50],['Greenwich','B',1080,1358,72,50],['Dobbs Ferry','B',136,446,133,50],['Eastchester','B',393,694,402,50],['YONKERS','B',50,332,554,54],['New Rochelle','B',456,812,651,50],['Glen Cove','B',1072,1328,898,50],['Mineola','B',1071,1276,1466,50],
 ['NEW YORK','C',1029,1463,146,70],['Union','C',191,343,211,50],['ELIZABETH','C',307,628,381,54],['Bayonne','C',723,946,360,50],['Woodbridge','C',36,348,921,50],['Perth Amboy','C',88,430,1177,50],['H','C',560,587,1565,50],
 ['Garden City','D',1045,1350,67,50],['Hempstead','D',1106,1408,170,50],['Valley Stream','D',748,1104,388,50],['Freeport','D',1283,1503,416,50],['Long Beach','D',958,1258,765,50]
];
var seed = 7;
function rnd() { seed = (seed * 16807) % 2147483647; return seed / 2147483647 - 0.5; }
function pts(s) { return s.split(' ').map(function (p) { return p.split(',').map(Number); }); }
function rough(P, open) {
  var out = P;
  for (var k = 0; k < 3; k++) {
    var next = [];
    for (var i = 0; i < out.length; i++) {
      var a = out[i];
      next.push(a);
      if (open && i === out.length - 1) continue;
      var b = out[(i + 1) % out.length];
      var dx = b[0] - a[0], dy = b[1] - a[1], l = Math.hypot(dx, dy);
      if (l > 16 && l < 420) {
        var j = rnd() * Math.min(0.26, 14 / l);
        next.push([(a[0] + b[0]) / 2 - dy * j, (a[1] + b[1]) / 2 + dx * j]);
      }
    }
    out = next;
  }
  return 'M' + out.map(function (p) { return p[0].toFixed(1) + ',' + p[1].toFixed(1); }).join('L') + (open ? '' : 'Z');
}
function area(P) { return rough(P, false); }
function trace(P) { return rough(P, true); }
function smooth(P) {
  var d = 'M' + P[0], t = 0.1;
  for (var i = 0; i < P.length - 1; i++) {
    var a = P[i - 1] || P[i], b = P[i], c = P[i + 1], e = P[i + 2] || c;
    d += 'C' + [b[0] + (c[0] - a[0]) * t, b[1] + (c[1] - a[1]) * t, c[0] - (e[0] - b[0]) * t, c[1] - (e[1] - b[1]) * t, c[0], c[1]].join(' ');
  }
  return d;
}
function place(t) { var T = TILES[t]; return `transform="translate(${T[0]} ${T[1]}) scale(${T[2]} ${T[3]})"`; }
function layer(key, attrs, fn) {
  return Object.keys(MAP[key]).map(function (t) {
    return `<g ${place(t)} ${attrs}><path d="${MAP[key][t].map(function (s) { return fn(pts(s)); }).join('')}"/></g>`;
  }).join('');
}
function airports() {
  return `<g ${place('D')} fill="#f4f4f3" stroke="#e3e3e3" stroke-width="2.5"><path d="M485 385L520 370 640 372 735 440 765 485 765 515 690 560 655 540 625 578 612 570 635 530 500 460 478 430z"/><path fill="none" d="M490 410L640 500M500 395L650 480M530 380L700 500M510 450L570 400M650 530L735 445M640 520L720 430M630 510L700 420M660 545L745 465M560 470L640 400M610 470L640 440 680 450 640 500zM500 430L560 380M580 375L580 440M620 575L690 440M670 555L700 470"/></g>
  <g ${place('C')} fill="none" stroke="#e2e2e2" stroke-width="2.5"><path d="M580 160L665 150 665 200 600 320 565 310 590 240 575 200zM590 150L600 300M610 155L590 310M630 150L605 315M650 155L600 310M580 180L660 170M580 200L660 190M590 225L650 210M590 250L640 230M580 280L620 270M575 300L610 290"/></g>`;
}
function roads() {
  return '<g fill="none" stroke-linejoin="round" stroke-linecap="round">' +
  layer('minor', 'stroke="#e7e7e7" stroke-width="3"', smooth) +
  layer('mid', 'stroke="#e4e4e3" stroke-width="6.5"', smooth) +
  layer('border', 'stroke="#e3c9ce" stroke-width="5" stroke-dasharray="10 8" stroke-linecap="butt"', trace) +
  layer('major', 'stroke="#dbdbda" stroke-width="15.5"', smooth) +
  layer('major', 'stroke="#fff" stroke-width="7.5"', smooth) + '</g>';
}
function labels() {
  return LABELS.map(function (L) {
    var T = TILES[L[1]];
    return `<text x="${(T[0] + L[2] * T[2]).toFixed(1)}" y="${(T[1] + L[4] * T[3]).toFixed(1)}" font-size="${(L[5] * T[2]).toFixed(1)}" textLength="${((L[3] - L[2]) * T[2]).toFixed(1)}" lengthAdjust="spacingAndGlyphs">${L[0]}</text>`;
  }).join('');
}
var CLUSTERS = [[439, 638, 334, 'large'], [2632, 620, 512, 'large'], [5706, 500, 618, 'large'], [44, 844, 624, 'medium'], [92, 318, 788, 'medium'], [68, 236, 922, 'medium'], [25, 722, 860, 'medium'], [3, 594, 904, 'small']];

define('restaurant-map', `
:host{display:block;position:relative;width:1084px;height:1166px;overflow:hidden;background:#fbfbfa}
.base{display:block}
text{font-family:Inter,"Open Sans",sans-serif;font-weight:600;fill:#939eae;stroke:#fbfbfa;stroke-width:4px;paint-order:stroke;stroke-linejoin:round}
.bay{font-style:italic;font-weight:500;fill:#7c919f;stroke:#e9ecee}
.zoom{position:absolute;left:20px;top:20px;width:68px;height:128px;border:4px solid rgba(0,0,0,.2);border-radius:8px}
.zoom div{height:60px;background:#fff;border-bottom:2px solid #ccc;border-radius:4px 4px 0 0;display:flex;align-items:center;justify-content:center;padding:10px 0 0 1px}
.zoom div+div{background:#f4f4f4;border:0;border-radius:0 0 4px 4px}
.att{position:absolute;left:526px;right:0;bottom:0;height:2px;background:rgba(255,255,255,.7)}`,
function () {
  return `<svg class="base" width="1084" height="1166" viewBox="0 0 1084 1166">
  ${layer('urban', 'fill="#f5f5f4"', area)}${layer('park', 'fill="#eff3f1"', area)}
  ${layer('stream', 'fill="none" stroke="#d6dfe4" stroke-width="5" stroke-linejoin="round"', trace)}
  ${layer('creek', 'fill="none" stroke="#d5dadd" stroke-width="18" stroke-linejoin="round"', trace)}
  ${layer('water', 'fill="#d5dadd"', area)}${layer('land', 'fill="#f7f8f6"', area)}
  ${airports()}${roads()}${labels()}
  <text class="bay" x="258.5" y="1004" font-size="18" textLength="142" lengthAdjust="spacingAndGlyphs">Lower New York</text>
  <text class="bay" x="313" y="1026" font-size="18" textLength="34" lengthAdjust="spacingAndGlyphs">Bay</text>
  </svg>
  <div class="zoom"><div><svg width="24" height="24"><path d="M12 0v24M0 12h24" stroke="#000" stroke-width="4.6"/></svg></div><div><svg width="24" height="24"><path d="M0 12h24" stroke="#bbb" stroke-width="4.6"/></svg></div></div>
  ` + CLUSTERS.map(function (c) { return `<map-cluster size="${c[3]}" style="left:${c[1]}px;top:${c[2]}px">${c[0]}</map-cluster>`; }).join('') + '<div class="att"></div>';
});

define('dash-app', `
:host{display:flex;flex-direction:column;box-sizing:border-box;height:1646px;overflow:hidden;border-top:4px solid #29272b}
.row{display:flex;flex:1;min-height:0}
main{flex:1;display:flex;gap:60px;padding:24px 60px 0}
section{width:1084px;flex:none}
h2{margin:0 0 20px;font-size:53.95px;line-height:62px;font-weight:400;white-space:nowrap;height:66px}
i{font:normal 26px/1 "Open Sans",sans-serif}
info-box{margin-bottom:80px}`,
`<div class="row"><dash-sidebar></dash-sidebar><main>
<section><info-box>Positivity rate is an important indicator. A low COVID positive test rate suggests enough<br>widespread, aggressive testing to detect most new cases. WHO recommends a positive<br>test rate of less than 10%. The countries most successful in containing COVID have rates<br>of 3% or less.<br><br>Search the ZIP code of the area you<i>’</i>re interested in dining.</info-box>
<h2>Recent Situation by ZIP</h2><zip-table></zip-table></section>
<section><borough-field><span slot="label">Choose the Borough</span>Choose Borough</borough-field>
<h2>NYC Open Restaurants Map</h2><restaurant-map></restaurant-map></section></main></div>`);
</script>
</body>
</html>
